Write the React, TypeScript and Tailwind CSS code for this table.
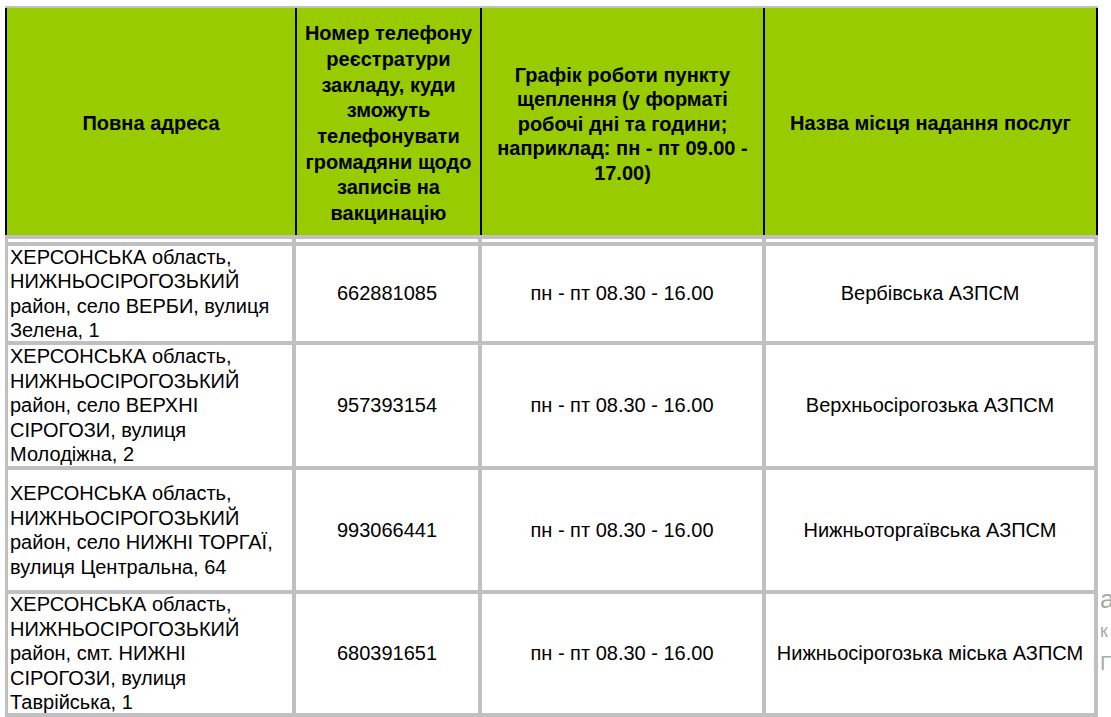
import React from 'react';

const font = { fontFamily: '"Liberation Sans", Arial, sans-serif' };

interface Row {
  address: string[];
  phone: string;
  hours: string;
  place: string;
}

const rows: Row[] = [
  {
    address: ['ХЕРСОНСЬКА область,', 'НИЖНЬОСІРОГОЗЬКИЙ', 'район, село ВЕРБИ, вулиця', 'Зелена, 1'],
    phone: '662881085',
    hours: 'пн - пт 08.30 - 16.00',
    place: 'Вербівська АЗПСМ',
  },
  {
    address: ['ХЕРСОНСЬКА область,', 'НИЖНЬОСІРОГОЗЬКИЙ', 'район, село ВЕРХНІ', 'СІРОГОЗИ, вулиця', 'Молодіжна, 2'],
    phone: '957393154',
    hours: 'пн - пт 08.30 - 16.00',
    place: 'Верхньосірогозька АЗПСМ',
  },
  {
    address: ['ХЕРСОНСЬКА область,', 'НИЖНЬОСІРОГОЗЬКИЙ', 'район, село НИЖНІ ТОРГАЇ,', 'вулиця Центральна, 64'],
    phone: '993066441',
    hours: 'пн - пт 08.30 - 16.00',
    place: 'Нижньоторгаївська АЗПСМ',
  },
  {
    address: ['ХЕРСОНСЬКА область,', 'НИЖНЬОСІРОГОЗЬКИЙ', 'район, смт. НИЖНІ', 'СІРОГОЗИ, вулиця', 'Таврійська, 1'],
    phone: '680391651',
    hours: 'пн - пт 08.30 - 16.00',
    place: 'Нижньосірогозька міська АЗПСМ',
  },
];

function HeaderCell({ lines, className }: { lines: string[]; className: string }) {
  return (
    <div className={`flex items-center justify-center bg-[#99cc00] pt-[5px] text-center font-bold text-[20px] text-black whitespace-nowrap ${className}`}>
      <div>
        {lines.map((l, i) => (
          <div key={i}>{l}</div>
        ))}
      </div>
    </div>
  );
}

export default function App() {
  return (
    <div className="w-[1111px] h-[717px] overflow-hidden bg-white flex" style={font}>
      <div className="w-[1098px] shrink-0 pl-[5px] pt-[6px]">
        <div className="border-t-2 border-[#c0c0c0]">
          {/* header */}
          <div className="flex h-[227px] border-x-2 border-black gap-[2px] bg-black">
            <HeaderCell className="w-[288px] leading-[25.7px]" lines={['Повна адреса']} />
            <HeaderCell
              className="w-[183px] leading-[25.7px]"
              lines={[
                'Номер телефону',
                'реєстратури',
                'закладу, куди',
                'зможуть',
                'телефонувати',
                'громадяни щодо',
                'записів на',
                'вакцинацію',
              ]}
            />
            <HeaderCell
              className="w-[281px] leading-[24.5px]"
              lines={[
                'Графік роботи пункту',
                'щеплення (у форматі',
                'робочі дні та години;',
                'наприклад: пн - пт 09.00 -',
                '17.00)',
              ]}
            />
            <HeaderCell className="flex-1 leading-[25.7px]" lines={['Назва місця надання послуг']} />
          </div>

          {/* body */}
          <div className="grid grid-cols-[284px_182px_280px_328px] grid-rows-[3px_95px_121px_120px_119px] gap-[4px] bg-[#c0c0c0] pt-[4px] pb-[4px] pl-[3px] pr-[4px] text-[20px] leading-[24.5px] text-black">
            <div className="bg-white" />
            <div className="bg-white" />
            <div className="bg-white" />
            <div className="bg-white" />
            {rows.map((r, i) => (
              <React.Fragment key={i}>
                <div className="bg-white pl-[2px] flex flex-col justify-center">
                  {r.address.map((l, j) => (
                    <div key={j} className="whitespace-nowrap">{l}</div>
                  ))}
                </div>
                <div className="bg-white flex items-center justify-center">{r.phone}</div>
                <div className="bg-white flex items-center justify-center whitespace-nowrap">{r.hours}</div>
                <div className="bg-white flex items-center justify-center whitespace-nowrap">{r.place}</div>
              </React.Fragment>
            ))}
          </div>
        </div>
      </div>

      {/* text bleeding from the page behind */}
      <div className="flex-1 overflow-hidden pt-[586px] pl-[2px] text-[#a8a8a8] leading-none">
        <div className="text-[26px] h-[36px]">а</div>
        <div className="text-[18px] h-[30px]">к</div>
        <div className="text-[21px]">Г</div>
      </div>
    </div>
  );
}
